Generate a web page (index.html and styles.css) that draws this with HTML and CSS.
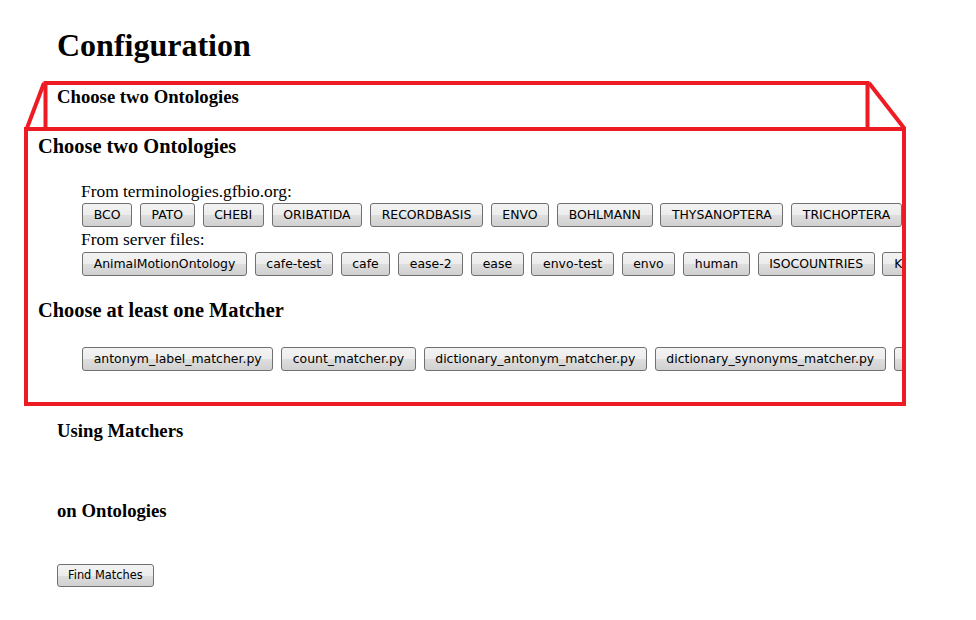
FILE: index.html
```html
<!DOCTYPE html>
<html>
<head>
<meta charset="utf-8">
<title>Configuration</title>
<link rel="stylesheet" href="styles.css">
</head>
<body>
<div class="page">
  <h1 class="title">Configuration</h1>
  <h3 class="sec">Choose two Ontologies</h3>

  <div class="zoom">
    <h3 class="zsec">Choose two Ontologies</h3>
    <div class="group">
      <div class="label first">From terminologies.gfbio.org:</div>
      <div class="btns">
        <button class="btn">BCO</button>
        <button class="btn">PATO</button>
        <button class="btn">CHEBI</button>
        <button class="btn">ORIBATIDA</button>
        <button class="btn">RECORDBASIS</button>
        <button class="btn">ENVO</button>
        <button class="btn">BOHLMANN</button>
        <button class="btn">THYSANOPTERA</button>
        <button class="btn">TRICHOPTERA</button>
      </div>
      <div class="label">From server files:</div>
      <div class="btns">
        <button class="btn">AnimalMotionOntology</button>
        <button class="btn">cafe-test</button>
        <button class="btn">cafe</button>
        <button class="btn">ease-2</button>
        <button class="btn">ease</button>
        <button class="btn">envo-test</button>
        <button class="btn">envo</button>
        <button class="btn">human</button>
        <button class="btn">ISOCOUNTRIES</button>
        <button class="btn">K</button>
      </div>
    </div>
    <h3 class="zsec second">Choose at least one Matcher</h3>
    <div class="group">
      <div class="btns matchers">
        <button class="btn">antonym_label_matcher.py</button>
        <button class="btn">count_matcher.py</button>
        <button class="btn">dictionary_antonym_matcher.py</button>
        <button class="btn">dictionary_synonyms_matcher.py</button>
        <button class="btn blank" aria-label="more"></button>
      </div>
    </div>
  </div>

  <h3 class="sec using">Using Matchers</h3>
  <h3 class="sec onto">on Ontologies</h3>
  <button class="btn small">Find Matches</button>
</div>

<svg class="annot" width="976" height="620" viewBox="0 0 976 620" aria-hidden="true">
  <g stroke="#ed1c24" stroke-width="4" fill="none" stroke-linejoin="miter">
    <polyline points="45.5,129 45.5,83 867.5,83 867.5,129"/>
    <line x1="44" y1="83" x2="27" y2="128"/>
    <line x1="869" y1="83" x2="904" y2="128"/>
  </g>
</svg>
</body>
</html>
```

FILE: styles.css
```css
html, body {
  margin: 0;
  padding: 0;
  background: #ffffff;
}

body {
  position: relative;
  width: 976px;
  height: 620px;
  overflow: hidden;
  font-family: "Liberation Serif", "Times New Roman", serif;
  color: #000000;
}

.page {
  padding: 27px 0 0 57px;
}

.title {
  margin: 0;
  font-size: 32px;
  line-height: 37px;
  font-weight: bold;
}

.sec {
  margin: 22px 0 0 0;
  font-size: 18.72px;
  line-height: 22px;
  font-weight: bold;
}

.sec.using {
  margin-top: 14px;
}

.sec.onto {
  margin-top: 58px;
}

.zoom {
  box-sizing: border-box;
  margin: 19px 0 0 -33px;
  width: 882px;
  height: 279px;
  border: 4px solid #ed1c24;
  overflow: hidden;
  padding: 3px 0 0 10px;
  background: #ffffff;
}

.zsec {
  margin: 0;
  font-size: 20.4px;
  line-height: 24px;
  font-weight: bold;
  white-space: nowrap;
}

.zsec.second {
  margin-top: 21.8px;
}

.group {
  padding-left: 43px;
}

.label {
  margin-top: 2px;
  font-size: 17.4px;
  line-height: 20px;
  white-space: nowrap;
}

.label.first {
  margin-top: 22.6px;
}

.btns {
  display: flex;
  flex-wrap: nowrap;
  gap: 7.75px;
  margin-top: 3px;
  padding-left: 1px;
}

.label.first + .btns {
  margin-top: 2.4px;
}

.btns.matchers {
  margin-top: 25.2px;
}

.btn {
  flex-shrink: 0;
  box-sizing: border-box;
  height: 24px;
  margin: 0;
  padding: 0 10.65px;
  border: 1px solid #707070;
  border-radius: 3px;
  background: linear-gradient(#f3f3f3 0%, #ececec 50%, #dedede 50%, #d0d0d0 100%);
  font-family: "DejaVu Sans", "Liberation Sans", sans-serif;
  font-size: 12.45px;
  line-height: 22px;
  color: #000000;
  white-space: nowrap;
}

.btn.blank {
  width: 60px;
}

.btn.small {
  display: block;
  margin-top: 42px;
  height: 23px;
  padding: 0 10px;
  font-size: 11.4px;
  line-height: 21px;
}

.annot {
  position: absolute;
  left: 0;
  top: 0;
  pointer-events: none;
}
```
